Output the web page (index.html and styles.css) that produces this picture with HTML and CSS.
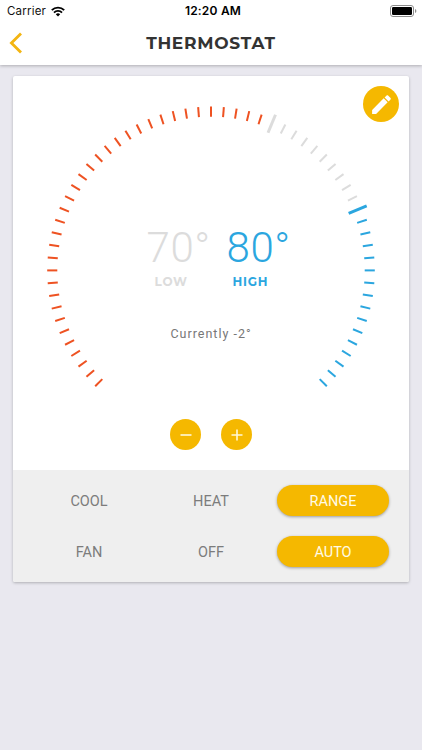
FILE: index.html
```html
<!DOCTYPE html>
<html lang="en">
<head>
    <meta charset="UTF-8">
    <meta name="viewport" content="width=device-width, initial-scale=1.0">
    <title>Thermostat</title>
    <link rel="stylesheet" href="styles.css">
</head>
<body>
    <header class="header">
        <div class="status-bar">
            <div class="carrier">
                <span>Carrier</span>
                <svg class="wifi" viewBox="0 0 14 11" width="14" height="11">
                    <path d="M.8 4.2a8.8 8.8 0 0 1 12.4 0M3 6.6a5.6 5.6 0 0 1 8 0" fill="none" stroke="#000" stroke-width="1.9"/>
                    <path d="M7 10.6L4.8 8.3a3.1 3.1 0 0 1 4.4 0z"/>
                </svg>
            </div>
            <div class="time">12:20 AM</div>
            <svg class="battery" viewBox="0 0 27 12" width="27" height="12">
                <rect x="0.5" y="0.5" width="23" height="11" rx="2.5" fill="none" stroke="#8c8c8c"/>
                <rect x="2" y="2" width="20" height="8" rx="1.2"/>
                <path d="M25 4v4q1.4-.6 1.4-2T25 4z" fill="#8c8c8c"/>
            </svg>
        </div>
        <div class="nav-bar">
            <svg class="back" viewBox="0 0 14 22" width="14" height="22">
                <path d="M13 1.4L3.4 11l9.6 9.6" fill="none" stroke="#f3b512" stroke-width="2.8"/>
            </svg>
            <h1 class="title">THERMOSTAT</h1>
        </div>
    </header>

    <main class="card">
        <div class="dial-area">
            <svg id="dial" class="dial" viewBox="-170 -170 340 300" width="340" height="300"></svg>
            <div class="readings">
                <div class="reading low">
                    <div class="degrees">70°</div>
                    <div class="label">LOW</div>
                </div>
                <div class="reading high">
                    <div class="degrees">80°</div>
                    <div class="label">HIGH</div>
                </div>
            </div>
            <p class="current">Currently -2°</p>
            <button class="round-button edit-button" aria-label="Edit">
                <svg viewBox="0 0 24 24" width="25" height="25" fill="#fff">
                    <path d="M3 17.2L3 21l3.8 0L17.9 9.9l-3.8-3.8zM20.7 7.1c.4-.4.4-1 0-1.4l-2.4-2.4c-.4-.4-1-.4-1.4 0l-1.9 1.9 3.8 3.8z"/>
                </svg>
            </button>
        </div>

        <div class="steps">
            <button class="round-button" id="minusButton" aria-label="Decrease">
                <svg viewBox="0 0 12 12" width="12" height="12"><path d="M.5 6h11" stroke="#fff8d8" stroke-width="1.6"/></svg>
            </button>
            <button class="round-button" id="plusButton" aria-label="Increase">
                <svg viewBox="0 0 12 12" width="12" height="12"><path d="M.5 6h11M6 .5v11" stroke="#fff8d8" stroke-width="1.6"/></svg>
            </button>
        </div>

        <div class="modes">
            <button class="mode">COOL</button>
            <button class="mode">HEAT</button>
            <button class="mode selected">RANGE</button>
            <button class="mode">FAN</button>
            <button class="mode">OFF</button>
            <button class="mode selected">AUTO</button>
        </div>
    </main>

    <script src="script.js"></script>
</body>
</html>
```

FILE: styles.css
```css
* {
    box-sizing: border-box;
}

body {
    margin: 0;
    min-height: 750px;
    background-color: #e9e8ef;
    font-family: Roboto, "Liberation Sans", sans-serif;
}

button {
    padding: 0;
    border: none;
    font-family: inherit;
    cursor: pointer;
}

.header {
    height: 65px;
    background-color: #fff;
    box-shadow: 0 1px 3px rgba(0, 0, 0, 0.25);
}

.status-bar {
    display: grid;
    grid-template-columns: 1fr auto 1fr;
    align-items: center;
    height: 22px;
    padding: 0 5px 0 7px;
    font-family: Inter, sans-serif;
    font-size: 11.5px;
    letter-spacing: 0.2px;
    color: #111;
}

.carrier {
    display: flex;
    align-items: center;
    gap: 5px;
}

.time {
    padding-left: 2px;
    margin-top: -1px;
    font-size: 12px;
    font-weight: 600;
    letter-spacing: 0.2px;
    color: #000;
}

.battery {
    justify-self: end;
    margin-bottom: 1px;
}

.nav-bar {
    display: grid;
    grid-template-columns: 40px 1fr 40px;
    align-items: center;
    height: 41px;
}

.back {
    margin-left: 8px;
}

.title {
    margin: 0;
    text-align: center;
    font-family: Montserrat, Inter, sans-serif;
    font-size: 17px;
    font-weight: 700;
    letter-spacing: 0.75px;
    line-height: 20px;
    white-space: nowrap;
    color: #333;
}

.card {
    width: 396px;
    margin: 11px 0 0 13px;
    background-color: #fff;
    border-radius: 2px;
    box-shadow: 0 1px 3px rgba(0, 0, 0, 0.25);
}

/* dial and texts share one grid cell */
.dial-area {
    position: relative;
    display: grid;
    justify-items: center;
    height: 343px;
    padding-top: 24px;
}

.dial,
.readings,
.current {
    grid-area: 1 / 1;
}

.readings {
    display: flex;
    gap: 17px;
    padding: 123px 0 0 14px;
    height: 200px;
}

.reading {
    width: 63px;
}

.degrees {
    font-size: 42px;
    font-weight: 300;
    letter-spacing: 0.6px;
    line-height: 50px;
    white-space: nowrap;
}

.label {
    margin-top: 1px;
    font-family: Montserrat, Inter, sans-serif;
    font-size: 12px;
    font-weight: 700;
    letter-spacing: 0.8px;
    line-height: 16px;
}

.low {
    color: #dcdcdc;
}

.low .label {
    margin-left: 8px;
}

.high {
    color: #2ba6df;
}

.high .label {
    margin-left: 6px;
}

.current {
    margin: 226px 0 0;
    font-size: 12.5px;
    letter-spacing: 1px;
    line-height: 16px;
    color: #777;
}

.round-button {
    display: flex;
    align-items: center;
    justify-content: center;
    width: 31px;
    height: 31px;
    border-radius: 50%;
    background-color: #f5b800;
}

.edit-button {
    position: absolute;
    top: 10px;
    right: 10px;
    width: 36px;
    height: 36px;
}

.steps {
    display: flex;
    justify-content: center;
    gap: 20px;
    height: 51px;
}

.modes {
    display: grid;
    grid-template-columns: repeat(3, 112px);
    column-gap: 10px;
    row-gap: 20px;
    height: 112px;
    padding: 15px 20px;
    background-color: #efefef;
    border-radius: 0 0 2px 2px;
}

.mode {
    height: 31px;
    padding-top: 2px;
    font-size: 14.5px;
    font-weight: 450;
    color: #7c7c7c;
    background: none;
}

.mode.selected {
    color: #fffbe6;
    background-color: #f5b800;
    border-radius: 16px;
    box-shadow: 0 1px 3px rgba(0, 0, 0, 0.35);
}
```

FILE: script.js
```javascript
const dial = document.getElementById('dial');

const tickCount = 61;
const lowTick = 35;
const highTick = 45;

// Draw the ticks from bottom left to bottom right
for (let i = 0; i < tickCount; i++) {
    const marker = i === lowTick || i === highTick;
    const line = document.createElementNS('http://www.w3.org/2000/svg', 'line');
    let color = '#dcdcdc';
    if (i < lowTick) {
        color = '#ee5222';
    } else if (i >= highTick) {
        color = '#2ba6df';
    }
    line.setAttribute('x1', 0);
    line.setAttribute('x2', 0);
    line.setAttribute('y1', marker ? -149 : -153.7);
    line.setAttribute('y2', marker ? -168.5 : -163.8);
    line.setAttribute('stroke', color);
    line.setAttribute('stroke-width', marker ? 3 : 2);
    line.setAttribute('transform', `translate(0 0.4) rotate(${-135 + i * 4.5})`);
    dial.appendChild(line);
}
```
